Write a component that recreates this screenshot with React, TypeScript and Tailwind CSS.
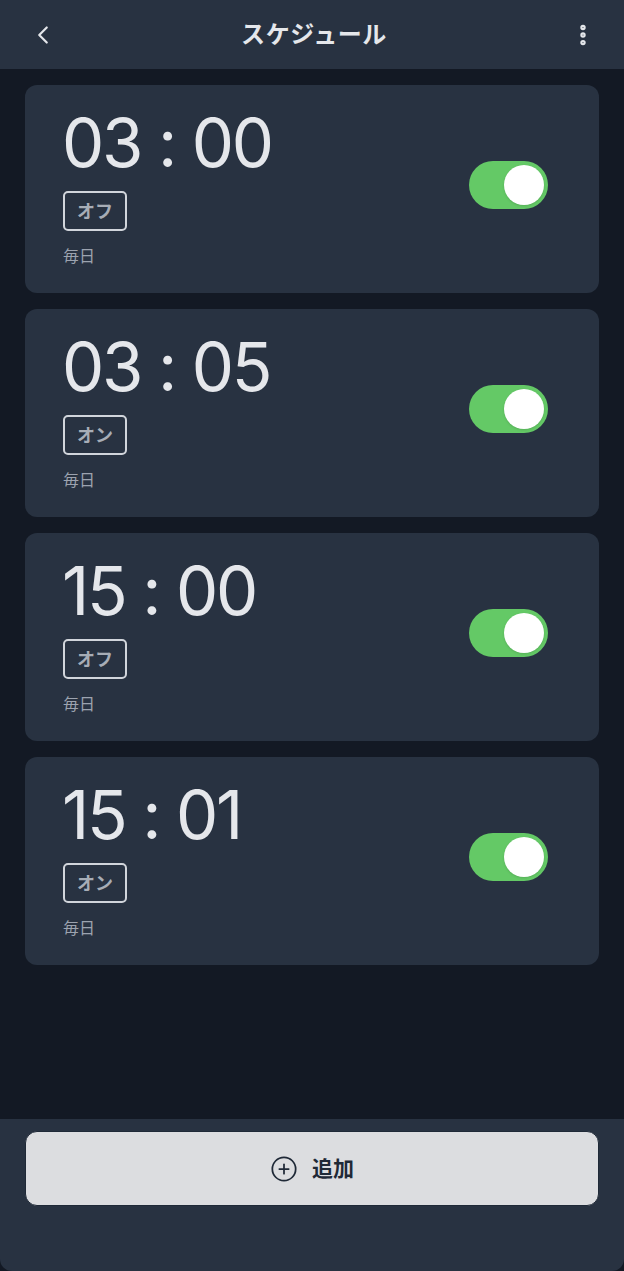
import { ChevronLeft, EllipsisVertical, CirclePlus } from "lucide-react";
import { useState } from "react";

const schedules = [
  { time: "03 : 00", action: "オフ", repeat: "毎日" },
  { time: "03 : 05", action: "オン", repeat: "毎日" },
  { time: "15 : 00", action: "オフ", repeat: "毎日" },
  { time: "15 : 01", action: "オン", repeat: "毎日" },
];

const font = {
  fontFamily: '"Inter", "Noto Sans CJK JP", sans-serif',
};

const Toggle = ({ on, onClick }: { on: boolean; onClick: () => void }) => {
  return (
    <button
      onClick={onClick}
      className={`w-[79px] h-[48px] rounded-full p-[4px] flex items-center ${
        on ? "bg-[#64c966] justify-end" : "bg-[#4b5563] justify-start"
      }`}
    >
      <span className="w-[40px] h-[40px] rounded-full bg-white shadow-sm" />
    </button>
  );
};

const App = () => {
  const [enabled, setEnabled] = useState([true, true, true, true]);

  return (
    <div
      className="w-[624px] h-[1271px] bg-[#131924] flex flex-col"
      style={font}
    >
      {/* header */}
      <div className="h-[69px] bg-[#283241] flex items-center justify-between px-[28px] shrink-0">
        <ChevronLeft className="w-[30px] h-[30px] text-[#e5e7eb]" strokeWidth={1.75} />
        <div className="text-[24px] font-bold text-[#e5e7eb] tracking-wide">
          スケジュール
        </div>
        <EllipsisVertical className="w-[26px] h-[26px] text-[#e5e7eb]" strokeWidth={3} />
      </div>

      {/* list */}
      <div className="flex-1 flex flex-col gap-[16px] px-[25px] pt-[16px]">
        {schedules.map((s, i) => (
          <div
            key={i}
            className="h-[208px] bg-[#283241] rounded-[12px] flex items-start justify-between pl-[38px] pr-[51px]"
          >
            <div className="flex flex-col items-start pt-[24px]">
              <div className="text-[67px] leading-[68px] font-normal text-[#e5e7eb] tracking-[-2.2px] -ml-[1px]">
                {s.time}
              </div>
              <div className="mt-[14px] w-[64px] h-[40px] border-2 border-[#d1d5db] rounded-[5px] flex items-center justify-center text-[18px] font-bold text-[#a7adb6]">
                {s.action}
              </div>
              <div className="mt-[13px] text-[16px] text-[#9ca3af]">
                {s.repeat}
              </div>
            </div>
            <div className="mt-[76px]">
              <Toggle
                on={enabled[i]}
                onClick={() =>
                  setEnabled(enabled.map((v, j) => (j === i ? !v : v)))
                }
              />
            </div>
          </div>
        ))}
      </div>

      {/* footer */}
      <div className="h-[152px] bg-[#283241] rounded-b-[12px] px-[25px] pt-[12px] shrink-0">
        <button className="w-full h-[75px] bg-[#dcdde0] border border-[#1f2937] rounded-[12px] flex items-center justify-center gap-[14px] text-[#1f2937]">
          <CirclePlus className="w-[28px] h-[28px]" strokeWidth={1.5} />
          <span className="text-[21px] font-bold">追加</span>
        </button>
      </div>
    </div>
  );
};

export default App;
